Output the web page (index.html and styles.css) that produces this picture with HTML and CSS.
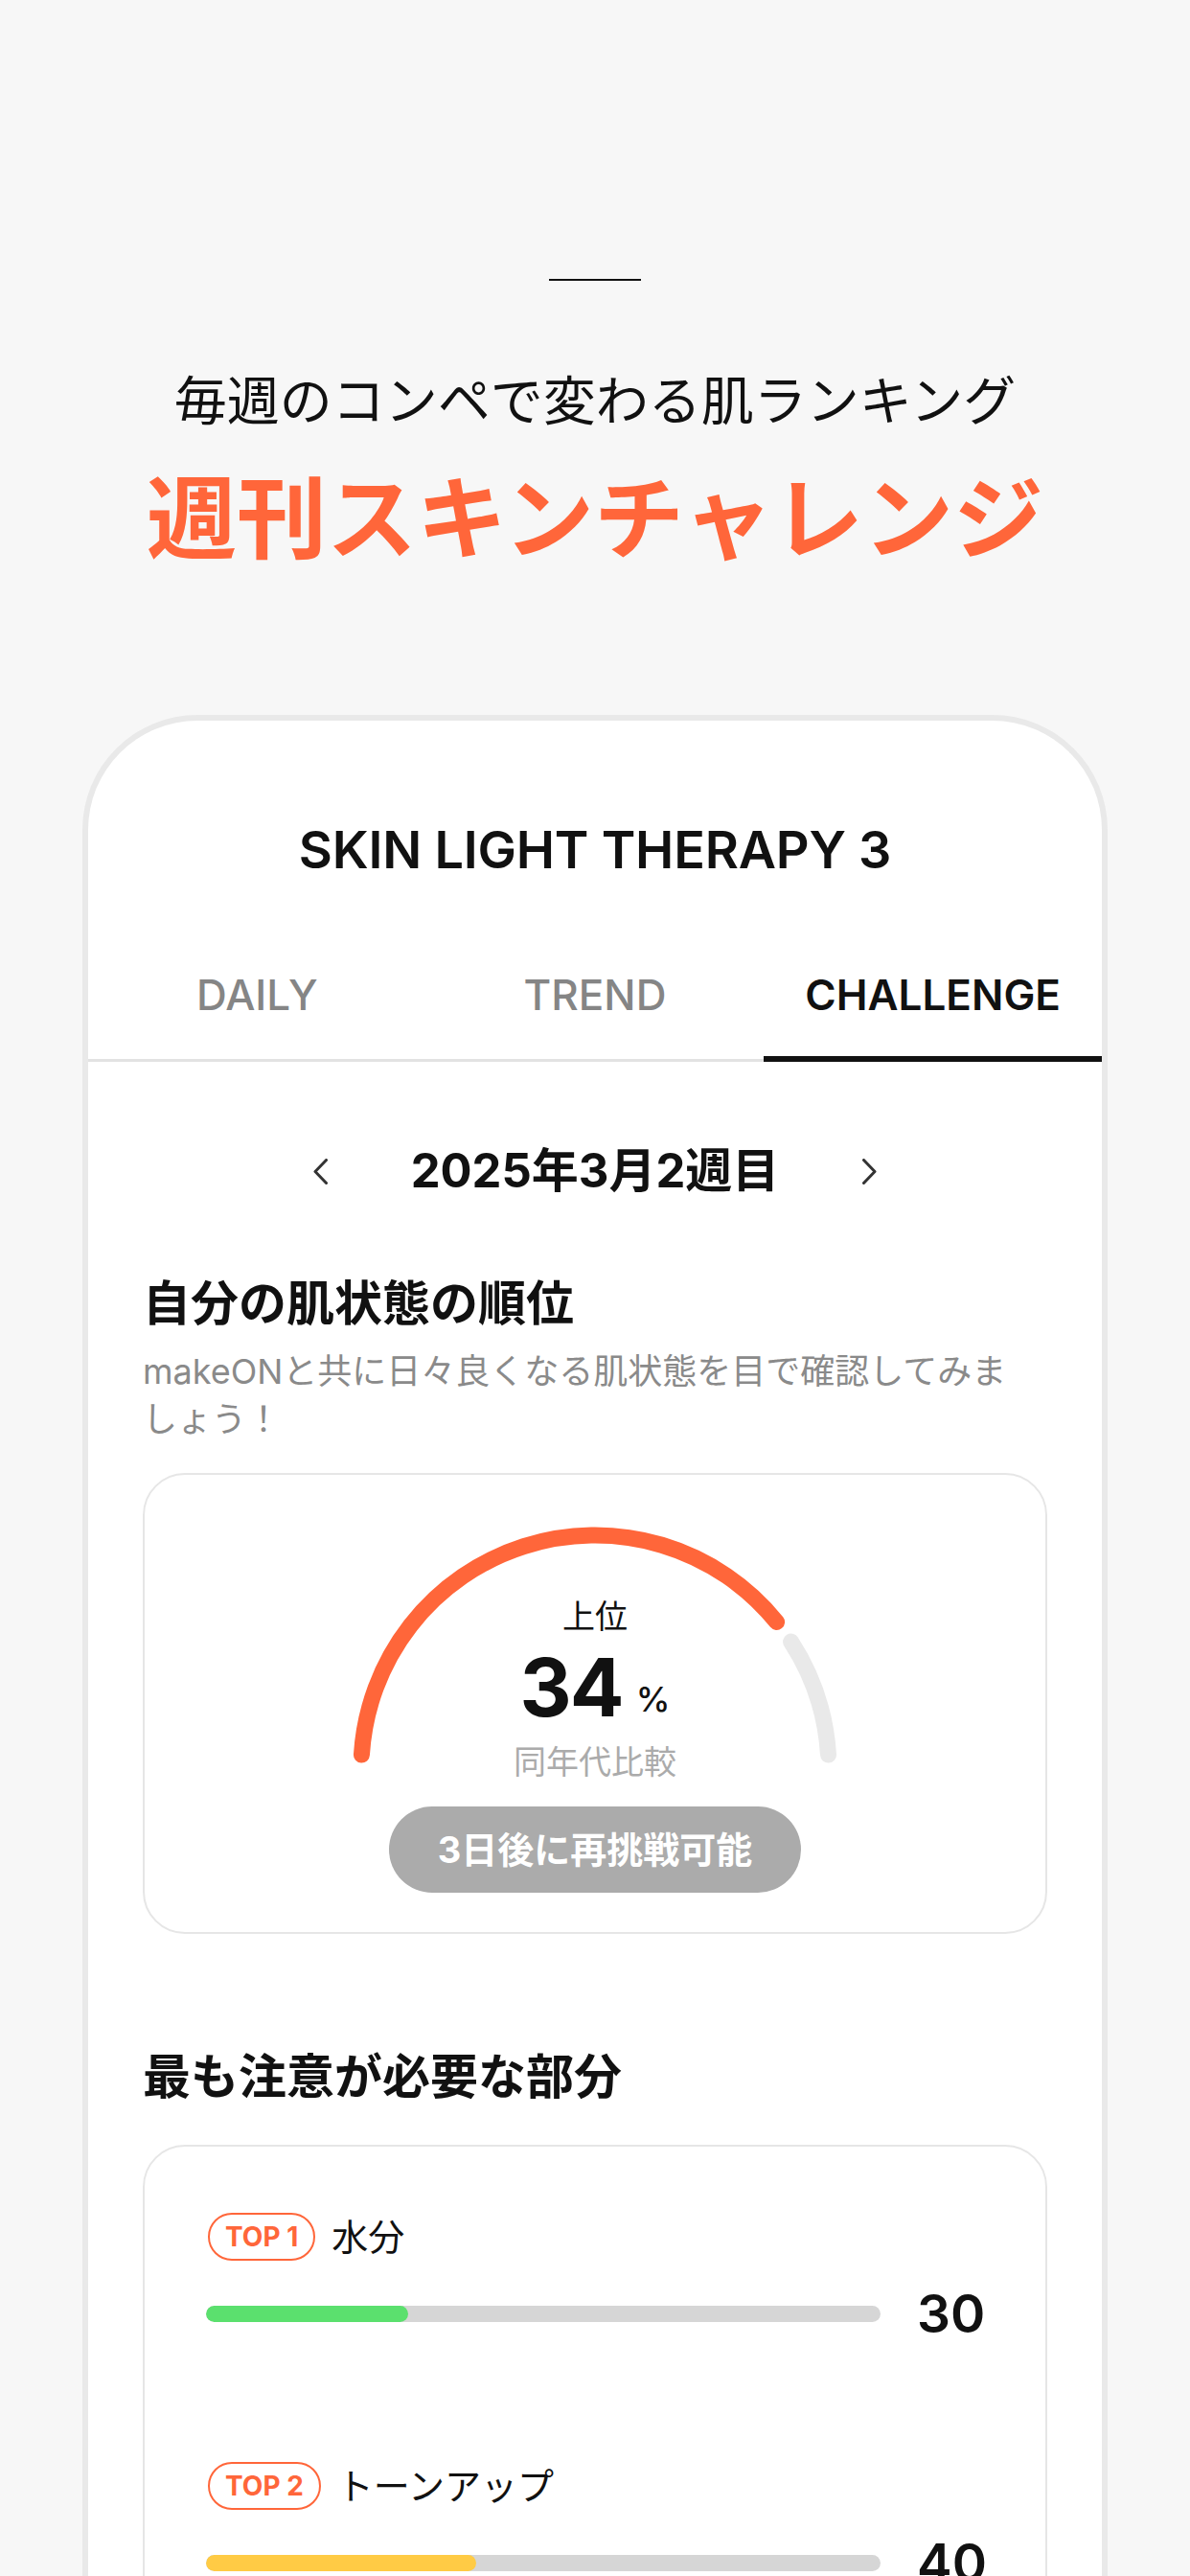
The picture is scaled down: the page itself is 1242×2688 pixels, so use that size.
FILE: index.html
```html
<!DOCTYPE html>
<html lang="ja">
<head>
<meta charset="utf-8">
<title>週刊スキンチャレンジ</title>
<link rel="stylesheet" href="styles.css">
</head>
<body>
<div class="page">
  <header class="hero">
    <div class="hero-rule"></div>
    <p class="hero-sub">毎週のコンペで変わる肌ランキング</p>
    <h1 class="hero-title">週刊スキンチャレンジ</h1>
  </header>

  <section class="phone">
    <h2 class="product">SKIN LIGHT THERAPY 3</h2>
    <nav class="tabs">
      <div class="tab">DAILY</div>
      <div class="tab">TREND</div>
      <div class="tab tab-active">CHALLENGE</div>
    </nav>

    <div class="content">
      <div class="week">
        <svg class="chev" width="15" height="27" viewBox="0 0 15 27"><polyline points="13.5,1.5 2,13.5 13.5,25.5" fill="none" stroke="#333" stroke-width="3" stroke-linecap="round" stroke-linejoin="round"/></svg>
        <div class="week-label">2025年3月2週目</div>
        <svg class="chev" width="15" height="27" viewBox="0 0 15 27"><polyline points="1.5,1.5 13,13.5 1.5,25.5" fill="none" stroke="#333" stroke-width="3" stroke-linecap="round" stroke-linejoin="round"/></svg>
      </div>

      <h3 class="sec-title">自分の肌状態の順位</h3>
      <p class="sec-desc">makeONと共に日々良くなる肌状態を目で確認してみま<br>しょう！</p>

      <div class="box gauge-box">
        <svg class="gauge" width="520" height="270" viewBox="0 0 520 270">
          <path d="M16.44 251.1 A244 244 0 0 1 449.6 112.5" fill="none" stroke="#FF663A" stroke-width="17" stroke-linecap="round"/>
          <path d="M464.6 133.1 A244 244 0 0 1 503.5 251.1" fill="none" stroke="#E9E9E9" stroke-width="17" stroke-linecap="round"/>
        </svg>
        <div class="g-top">上位</div>
        <div class="g-num">34<span class="g-pct">%</span></div>
        <div class="g-sub">同年代比較</div>
        <div class="retry">3日後に再挑戦可能</div>
      </div>

      <h3 class="sec-title sec-title-2">最も注意が必要な部分</h3>

      <div class="box parts-box">
        <div class="part">
          <div class="part-head">
            <span class="badge">TOP 1</span>
            <span class="part-name">水分</span>
          </div>
          <div class="part-bar-row">
            <div class="track"><div class="fill fill-green" style="width:30%"></div></div>
            <div class="part-score">30</div>
          </div>
        </div>
        <div class="part">
          <div class="part-head">
            <span class="badge">TOP 2</span>
            <span class="part-name">トーンアップ</span>
          </div>
          <div class="part-bar-row">
            <div class="track"><div class="fill fill-yellow" style="width:40%"></div></div>
            <div class="part-score">40</div>
          </div>
        </div>
      </div>
    </div>
  </section>
</div>
</body>
</html>
```

FILE: styles.css
```css
* { box-sizing: border-box; }
html, body { margin: 0; padding: 0; }
body {
  background: #f7f7f7;
  font-family: Inter, "Noto Sans CJK JP", sans-serif;
  color: #111;
}
.page {
  width: 1242px;
  height: 2688px;
  overflow: hidden;
}
.hero {
  padding-top: 291px;
  text-align: center;
}
.hero-rule {
  width: 96px;
  height: 2px;
  margin: 0 auto;
  background: #111;
}
.hero-sub {
  margin: 90px 0 0;
  font-size: 55px;
  line-height: 70px;
  font-weight: 400;
  color: #111;
}
.hero-title {
  margin: 34px 0 0;
  font-size: 94px;
  line-height: 110px;
  font-weight: 700;
  color: #FF663A;
}
.phone {
  margin: 149px 0 0 86px;
  width: 1070px;
  height: 2200px;
  background: #fff;
  border: 6px solid #e9e9e9;
  border-bottom: none;
  border-radius: 120px 120px 0 0;
}
.product {
  margin: 0;
  padding-top: 100px;
  font-size: 54px;
  line-height: 70px;
  font-weight: 600;
  letter-spacing: -0.2px;
  text-align: center;
  color: #111;
}
.tabs {
  display: flex;
  margin-top: 86px;
  padding-bottom: 37px;
  border-bottom: 3px solid #e2e2e2;
}
.tab {
  flex: 1;
  position: relative;
  text-align: center;
  font-size: 44px;
  line-height: 60px;
  font-weight: 500;
  color: #858585;
}
.tab-active {
  font-weight: 600;
  color: #111;
}
.tab-active::after {
  content: "";
  position: absolute;
  left: 0;
  right: 0;
  bottom: -40px;
  height: 6px;
  background: #111;
}
.content {
  padding: 0 57px;
}
.week {
  display: flex;
  justify-content: center;
  align-items: center;
  margin-top: 84px;
  height: 60px;
}
.chev { display: block; }
.week-label {
  width: 558px;
  text-align: center;
  font-size: 49px;
  line-height: 60px;
  font-weight: 700;
}
.sec-title {
  margin: 76px 0 0;
  font-size: 50px;
  line-height: 64px;
  font-weight: 700;
  color: #111;
}
.sec-desc {
  margin: 14px 0 0;
  font-size: 36px;
  line-height: 50px;
  color: #8a8a8a;
  white-space: nowrap;
}
.box {
  background: #fff;
  border: 2px solid #e6e6e6;
  border-radius: 44px;
}
.gauge-box {
  position: relative;
  margin-top: 31px;
  height: 481px;
  padding-top: 126px;
  text-align: center;
}
.gauge {
  position: absolute;
  left: 50%;
  top: 41px;
  margin-left: -260px;
}
.g-top, .g-num, .g-sub, .retry { position: relative; }
.g-top {
  font-size: 34px;
  line-height: 44px;
  color: #111;
}
.g-num {
  margin-top: 8px;
  font-size: 84px;
  line-height: 88px;
  font-weight: 700;
  letter-spacing: -2px;
  color: #111;
}
.g-pct {
  margin-left: 14px;
  font-size: 36px;
  font-weight: 500;
  letter-spacing: 0;
  vertical-align: 5px;
}
.g-sub {
  font-size: 34px;
  line-height: 44px;
  color: #ababab;
}
.retry {
  width: 430px;
  height: 90px;
  margin: 24px auto 0;
  border-radius: 45px;
  background: #ababab;
  color: #fff;
  font-size: 38px;
  font-weight: 700;
  line-height: 90px;
}
.sec-title-2 {
  margin-top: 117px;
}
.parts-box {
  margin-top: 39px;
  padding: 69px 64px 60px;
  border-radius: 44px 44px 0 0;
  height: 800px;
}
.part + .part {
  margin-top: 125px;
}
.part-head {
  display: flex;
  align-items: center;
  gap: 17px;
  height: 50px;
}
.badge {
  display: inline-block;
  height: 50px;
  padding: 0 16px;
  margin-left: 2px;
  border: 2px solid #FF663A;
  border-radius: 25px;
  color: #FF663A;
  font-size: 28px;
  font-weight: 700;
  line-height: 46px;
}
.part-name {
  font-size: 38px;
  line-height: 50px;
  color: #111;
}
.part-bar-row {
  display: flex;
  align-items: center;
  gap: 38px;
  margin-top: 25px;
  height: 60px;
}
.track {
  flex: 1;
  height: 17px;
  border-radius: 9px;
  background: #d6d6d6;
  overflow: hidden;
}
.fill {
  height: 100%;
  border-radius: 9px;
}
.fill-green { background: #5BE06E; }
.fill-yellow { background: #FFCB45; }
.part-score {
  width: 70px;
  font-size: 55px;
  line-height: 60px;
  font-weight: 600;
  color: #111;
}
```
